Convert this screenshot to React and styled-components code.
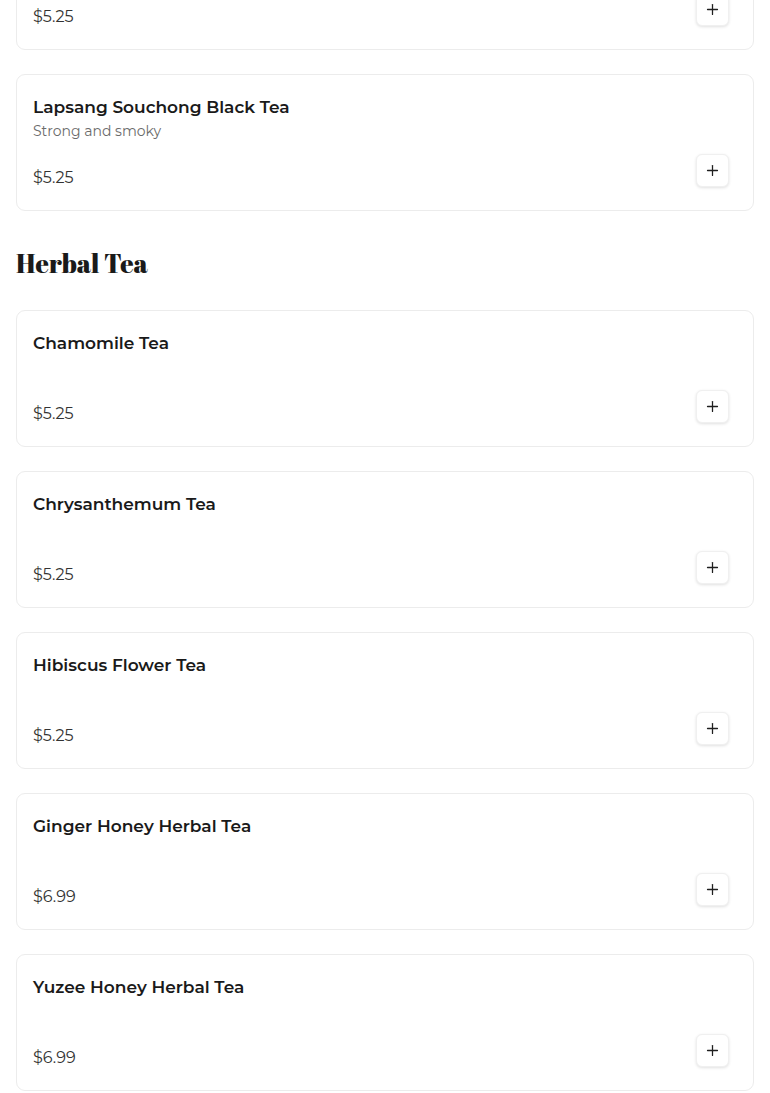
import React from 'react';
import styled, { createGlobalStyle } from 'styled-components';
import { Plus } from 'lucide-react';

const GlobalStyle = createGlobalStyle`
  body {
    margin: 0;
    background: #ffffff;
    font-family: Montserrat, "DejaVu Sans", "Noto Sans", sans-serif;
    color: #1a1a1a;
  }
`;

const Page = styled.div`
  padding: 0 16px;
  margin-top: -87px;
`;

const Section = styled.section`
  display: flex;
  flex-direction: column;
`;

const SectionTitle = styled.h2`
  margin: 35px 0 30px;
  font-family: "Abril Fatface", "DejaVu Serif", "Liberation Serif", serif;
  font-weight: 400;
  font-size: 26px;
  line-height: 34px;
  color: #1a1a1a;
`;

const CardList = styled.div`
  display: flex;
  flex-direction: column;
  gap: 24px;
`;

const Card = styled.div`
  border: 1px solid #ececec;
  border-radius: 9px;
  background: #fff;
  padding: 20px 24px 20px 16px;
  display: flex;
  flex-direction: column;
`;

const ItemName = styled.div`
  font-size: 17px;
  font-weight: 600;
  line-height: 24px;
  color: #1a1a1a;
`;

const ItemDesc = styled.div`
  margin-top: 2px;
  min-height: 20px;
  font-size: 14px;
  line-height: 20px;
  color: #6b6b6b;
`;

const Footer = styled.div`
  margin-top: 13px;
  display: flex;
  justify-content: space-between;
  align-items: flex-start;
`;

const Price = styled.div`
  margin-top: 12px;
  font-size: 16px;
  line-height: 24px;
  color: #333;
`;

const AddButton = styled.button`
  width: 33px;
  height: 33px;
  padding: 0;
  display: flex;
  align-items: center;
  justify-content: center;
  background: #fff;
  border: 1px solid #f0f0f0;
  border-radius: 6px;
  box-shadow: 0 1px 3px rgba(0, 0, 0, 0.12);
  color: #1f1f1f;
  cursor: pointer;
`;

const MenuItem = ({ name, desc, price }) => (
  <Card>
    <ItemName>{name}</ItemName>
    <ItemDesc>{desc}</ItemDesc>
    <Footer>
      <Price>{price}</Price>
      <AddButton aria-label={`Add ${name}`}>
        <Plus size={17} strokeWidth={1.8} />
      </AddButton>
    </Footer>
  </Card>
);

const blackTeas = [
  { name: 'Earl Grey Black Tea', desc: 'Fragrant bergamot', price: '$5.25' },
  { name: 'Lapsang Souchong Black Tea', desc: 'Strong and smoky', price: '$5.25' },
];

const herbalTeas = [
  { name: 'Chamomile Tea', desc: '', price: '$5.25' },
  { name: 'Chrysanthemum Tea', desc: '', price: '$5.25' },
  { name: 'Hibiscus Flower Tea', desc: '', price: '$5.25' },
  { name: 'Ginger Honey Herbal Tea', desc: '', price: '$6.99' },
  { name: 'Yuzee Honey Herbal Tea', desc: '', price: '$6.99' },
];

export default function App() {
  return (
    <>
      <GlobalStyle />
      <Page>
        <Section>
          <CardList>
            {blackTeas.map((tea) => <MenuItem key={tea.name} {...tea} />)}
          </CardList>
        </Section>
        <Section>
          <SectionTitle>Herbal Tea</SectionTitle>
          <CardList>
            {herbalTeas.map((tea) => <MenuItem key={tea.name} {...tea} />)}
          </CardList>
        </Section>
      </Page>
    </>
  );
}
